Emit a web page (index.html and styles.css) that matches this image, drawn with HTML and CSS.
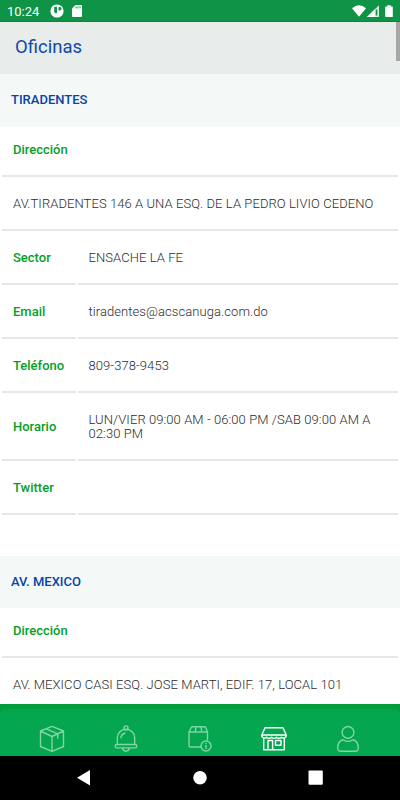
FILE: index.html
```html
<!DOCTYPE html>
<html lang="es">
<head>
<meta charset="utf-8">
<title>Oficinas</title>
<link rel="stylesheet" href="styles.css">
</head>
<body>
<div class="status">
  <span class="clock">10:24</span>
  <svg class="app" width="14" height="14" viewBox="0 0 14 14"><circle cx="7" cy="7" r="6.6" fill="#fff"/><path d="M4.2 2.8H7v6.3a2.2 2.2 0 0 1-2.8-1.2zM8.5 3h1.3a1.7 1.7 0 0 1 0 3.6H8.5z" fill="#0e9347"/></svg>
  <svg class="sd" width="10" height="12" viewBox="0 0 10 12"><path d="M3.5 0H9a1 1 0 0 1 1 1v10a1 1 0 0 1-1 1H1a1 1 0 0 1-1-1V3.5z" fill="#fff"/><path d="M4.1 1.4v2M6 1.4v2M8 1.4v2" stroke="#0e9347" stroke-width=".9"/></svg>
  <svg class="signals" width="42" height="13" viewBox="0 0 42 13"><path d="M0 3.2Q7-2.8 14 3.2L7 11.7z" fill="#fff"/><path d="M27 .3V12H15z" fill="#d5eddd"/><path d="M22.8 4.3V12H15z" fill="#fff"/><path d="M23.7 5v5.6h1.6V4z" fill="#0e9347"/><path d="M35.2.3h3.6v1.2h1.4q.6 0 .6.7v9.2q0 .6-.6.6h-6.4q-.6 0-.6-.6V2.2q0-.7.6-.7h1.4z" fill="#fff"/></svg>
</div>
<header class="title">Oficinas</header>
<main class="content">
  <section class="office lead">
    <h2>TIRADENTES</h2>
    <div class="row first"><div class="label">Dirección</div></div>
    <div class="row"><div class="value wide">AV.TIRADENTES 146 A UNA ESQ. DE LA PEDRO LIVIO CEDENO</div></div>
    <div class="row pair"><div class="label">Sector</div><div class="value">ENSACHE LA FE</div></div>
    <div class="row pair"><div class="label">Email</div><div class="value">tiradentes@acscanuga.com.do</div></div>
    <div class="row pair"><div class="label">Teléfono</div><div class="value">809-378-9453</div></div>
    <div class="row pair tall"><div class="label">Horario</div><div class="value"><p>LUN/VIER 09:00 AM - 06:00 PM /SAB 09:00 AM A<br>02:30 PM</p></div></div>
    <div class="row pair"><div class="label">Twitter</div><div class="value"></div></div>
  </section>
  <section class="office">
    <h2>AV. MEXICO</h2>
    <div class="row first"><div class="label">Dirección</div></div>
    <div class="row"><div class="value wide">AV. MEXICO CASI ESQ. JOSE MARTI, EDIF. 17, LOCAL 101</div></div>
  </section>
</main>
<div class="scrollbar"></div>
<nav class="tabs">
  <div class="bar">
    <svg viewBox="0 0 28 28"><path d="M14 1.3 25.5 6v15.5L14 26.3 2.5 21.5V6zM2.5 6 14 11.5 25.5 6M14 11.5v14.8M8.2 3.8l11.5 5v5"/></svg>
    <svg viewBox="0 0 28 28"><circle cx="14" cy="2.9" r="2"/><path d="M5.3 19.5V13a8.7 8.7 0 0 1 17.4 0v6.5M4.8 19.5h18.4q1.6 0 1.6 1.7t-1.6 1.7H4.8q-1.6 0-1.6-1.7t1.6-1.7zM10.5 23.2q.6 3 3.5 3t3.5-3M8.8 13.4q.2-4.4 4.6-5.4"/></svg>
    <svg viewBox="0 0 28 28"><path d="M16 22H4.5q-1.5 0-1.5-1.5V7l2.2-4.2q.5-1 1.6-1h11.4q1.1 0 1.6 1L21.5 7v8.5M3 7h18.5M10 2l-.8 5M15 2l.8 5"/><circle cx="20" cy="21" r="5"/><path d="M20 18v1M20 20v4"/></svg>
    <svg class="active" viewBox="0 0 28 28"><path d="M5 2.8h18L26.2 10v1.2a3 3 0 0 1-4.8 1 3.3 3.3 0 0 1-4.9 0 3.3 3.3 0 0 1-5 0 3.3 3.3 0 0 1-4.9 0 3 3 0 0 1-4.8-1V10zM1.8 10h24.4M3.7 13.5v11.2h20.6V13.5M8 24.5v-9h4.6v9M15.5 15.5h5.5v4.7h-5.5z"/></svg>
    <svg viewBox="0 0 28 28"><circle cx="14" cy="7.4" r="5.9"/><path d="M9.2 14.7Q3.7 16 3.7 23q0 3.2 3.2 3.2h14.2q3.2 0 3.2-3.2 0-7-5.5-8.3-4.8 3.4-9.6 0z"/></svg>
  </div>
</nav>
<div class="system">
  <svg width="400" height="44" viewBox="0 0 400 44"><path d="M77 21.7 90 14v15.5z"/><circle cx="200" cy="21.8" r="6.8"/><rect x="308.5" y="14.5" width="14.3" height="14.3" rx="1"/></svg>
</div>
</body>
</html>
```

FILE: styles.css
```css
* { box-sizing: border-box; }
body {
  margin: 0;
  width: 400px;
  height: 800px;
  overflow: hidden;
  display: flex;
  flex-direction: column;
  position: relative;
  background: #fff;
  font-family: Roboto, sans-serif;
}
.status {
  height: 22px;
  flex: none;
  display: flex;
  align-items: center;
  padding: 1px 6px 0 7px;
  background: #0e9347;
  border-bottom: 1px solid #078b20;
  color: #fff;
}
.clock { width: 43px; font-size: 13px; }
.sd { margin-left: 8px; }
.signals { margin-left: auto; }
.title {
  height: 52px;
  flex: none;
  padding-left: 15px;
  background: #e8eceb;
  color: #1147ad;
  font-size: 18.5px;
  line-height: 51px;
}
.content { flex: 1; min-height: 0; overflow: hidden; }
.office { padding-bottom: 41px; }
h2 {
  margin: 0;
  height: 52.5px;
  padding-left: 11px;
  background: #f4f8f7;
  color: #0844a5;
  font-size: 13px;
  font-weight: 500;
  line-height: 52px;
}
.row {
  display: grid;
  grid-template-columns: 1fr;
  gap: 2px;
  height: 54px;
  padding: 0 2px;
}
.row.first { height: 50px; }
.row.pair { grid-template-columns: 73.5px 1fr; }
.row.tall { height: 68px; }
.row > div {
  display: flex;
  align-items: center;
  padding-left: 11px;
  padding-top: 1px;
  border-bottom: 2px solid #e7e7e7;
  font-size: 13px;
  line-height: 14px;
}
.row.first > div { padding: 0 0 3px 11px; }
.lead .row > div { padding-top: 3px; }
.lead .row.first > div { padding: 0 0 1px 11px; }
.label { color: #04a028; font-weight: 500; }
.row > .value {
  color: #2c2c2c;
  font-weight: 300;
  letter-spacing: .075px;
  white-space: nowrap;
}
.value p { margin: 0; }
.scrollbar {
  position: absolute;
  top: 22px;
  right: 0;
  width: 4px;
  height: 39px;
  background: #a6a8a8;
}
.tabs {
  height: 52px;
  flex: none;
  padding-top: 5px;
  background: #039c3c;
}
.bar {
  height: 47px;
  display: grid;
  grid-template-columns: repeat(5, 74px);
  justify-content: center;
  justify-items: center;
  padding-top: 16px;
  border-radius: 6px 6px 0 0;
  background: #04a750;
}
.bar svg {
  width: 28px;
  height: 28px;
  fill: none;
  stroke: #82d3a5;
  stroke-width: 1.4;
  stroke-linejoin: round;
}
.bar svg.active { stroke: #fff; }
.system { height: 44px; flex: none; background: #000; }
.system svg { display: block; fill: #fff; }
```
